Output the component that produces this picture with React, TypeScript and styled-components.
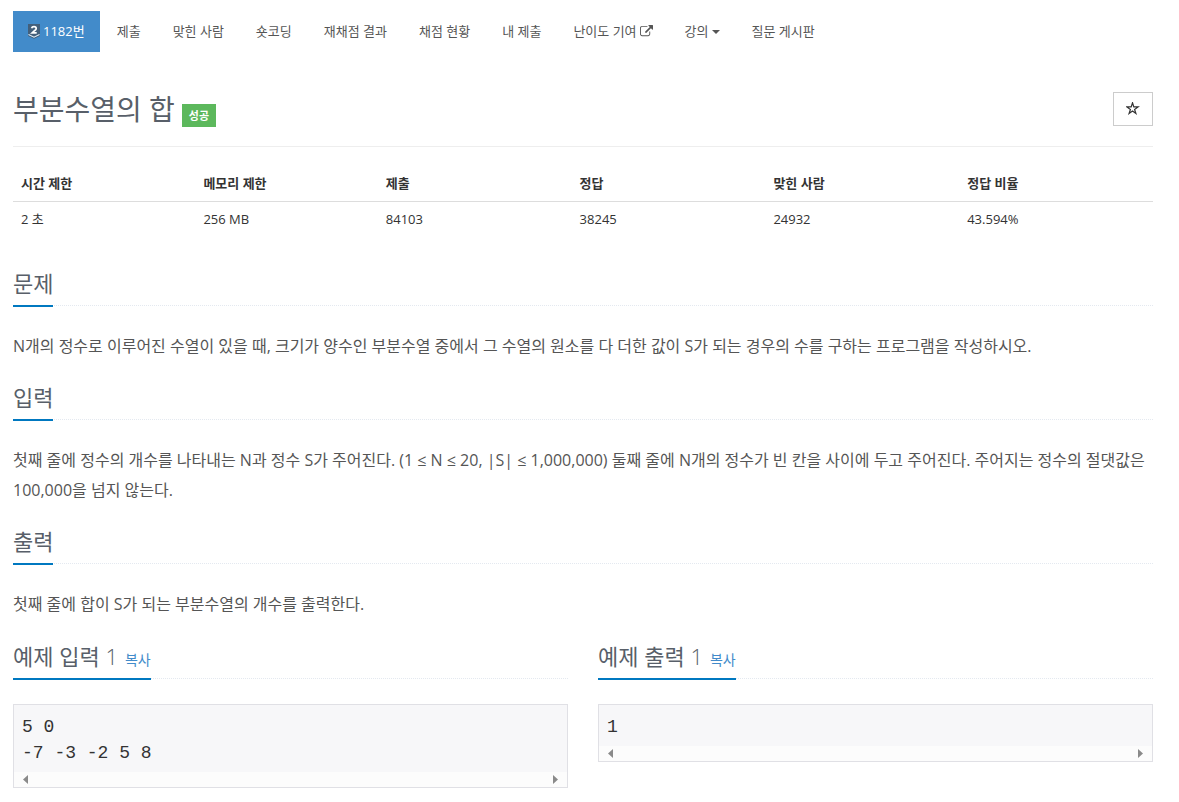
import React from "react";
import styled, { createGlobalStyle } from "styled-components";

const GlobalStyle = createGlobalStyle`
  *, *::before, *::after { box-sizing: border-box; }
  body {
    margin: 0;
    background: #fff;
    color: #333;
    font-family: "Open Sans", "Noto Sans CJK KR", sans-serif;
    font-size: 13px;
    line-height: 21px;
  }
`;

const Page = styled.main`
  max-width: 1179px;
  padding: 11px 26px 14px 13px;
`;

const Nav = styled.nav`
  display: flex;
  flex-wrap: wrap;
  gap: 2px;
`;

const NavLink = styled.a<{ $active?: boolean }>`
  display: flex;
  align-items: center;
  gap: 3px;
  padding: 10px 15px;
  text-decoration: none;
  white-space: nowrap;
  color: ${(p) => (p.$active ? "#fff" : "#555")};
  background: ${(p) => (p.$active ? "#428bca" : "transparent")};
`;

const Caret = styled.span`
  border-top: 4px solid currentColor;
  border-left: 4px solid transparent;
  border-right: 4px solid transparent;
`;

const TitleBar = styled.header`
  display: flex;
  align-items: flex-start;
  justify-content: space-between;
  margin-top: 40px;
  padding-bottom: 19px;
  border-bottom: 1px solid #eee;
`;

const TitleGroup = styled.div`
  display: flex;
  align-items: flex-end;
  gap: 7px;
`;

const Title = styled.h1`
  margin: 0;
  font-size: 28px;
  line-height: 35px;
  font-weight: 400;
  color: #585f69;
`;

const ResultLabel = styled.span`
  padding: 3px 7px 2px;
  background: #5cb85c;
  color: #fff;
  font-size: 11px;
  line-height: 18px;
  font-weight: 700;
`;

const StarButton = styled.button`
  display: flex;
  align-items: center;
  justify-content: center;
  width: 40px;
  height: 34px;
  padding: 0;
  border: 1px solid #ccc;
  background: #fff;
  color: #333;
`;

const InfoTable = styled.table`
  width: 100%;
  margin-top: 19px;
  border-collapse: collapse;
  table-layout: fixed;

  th,
  td {
    padding: 7px 8px;
    text-align: left;
  }
  th {
    border-bottom: 1px solid #ddd;
    font-weight: 700;
  }
  th:nth-child(-n + 2) {
    width: 16%;
  }
`;

const Section = styled.section<{ $gap?: number }>`
  margin-top: ${(p) => p.$gap ?? 20}px;
`;

const Headline = styled.div`
  display: flex;
  border-bottom: 1px dotted #e4e9f0;
`;

const Heading = styled.h2`
  margin: 0 0 -2px;
  padding-bottom: 5px;
  border-bottom: 2px solid #0078c0;
  font-size: 22px;
  line-height: 33px;
  font-weight: 400;
  color: #585f69;
  font-family: "Open Sans Light", "Noto Sans CJK KR", sans-serif;
`;

const CopyLink = styled.a`
  margin-left: 7px;
  color: #428bca;
  font-size: 14px;
  line-height: 1;
  text-decoration: none;
`;

const Text = styled.p`
  margin: 25px 0 0;
  font-size: 16px;
  line-height: 30px;
  font-weight: 400;
  color: #555;
`;

const Samples = styled.div`
  display: grid;
  grid-template-columns: 1fr 1fr;
  gap: 30px;
  align-items: start;
`;

const SampleBox = styled.div`
  margin-top: 25px;
  border: 1px solid #e0e0e5;
  background: #f7f7f9;
`;

const SampleData = styled.pre`
  margin: 0;
  padding: 9px 8px 6px;
  color: #333;
  font-family: "Liberation Mono", monospace;
  font-size: 18px;
  line-height: 26px;
`;

const ScrollTrack = styled.div`
  display: flex;
  align-items: center;
  justify-content: space-between;
  height: 15px;
  padding: 0 9px;
  background: #fcfcfc;
  color: #8a8a8a;
`;

const Arrow = ({ flip }: { flip?: boolean }) => (
  <svg width="5" height="9" viewBox="0 0 5 9" fill="currentColor" aria-hidden="true">
    <path d={flip ? "M0 0L5 4.5L0 9Z" : "M5 0L0 4.5L5 9Z"} />
  </svg>
);

const TierBadge = () => (
  <svg width="12" height="15" viewBox="0 0 12 15" aria-label="Silver II">
    <path d="M0 0H12V10L6 13L0 10Z" fill="#435f7a" />
    <path d="M0 10.6L6 13.4L12 10.6V12L6 14.8L0 12Z" fill="#435f7a" />
    <path d="M0.5 10.5L6 13.2L11.5 10.5" fill="none" stroke="#dfe8ef" strokeWidth="1.2" />
    <path d="M3.6 4.2Q4 2.6 6 2.6Q8.2 2.6 8.2 4.4Q8.2 5.4 6.8 6.5L4.2 8.9H8.7" fill="none" stroke="#fff" strokeWidth="1.7" />
  </svg>
);

const ExternalIcon = () => (
  <svg width="13" height="13" viewBox="0 0 1792 1792" fill="currentColor" aria-hidden="true">
    <path d="M1408 928v320q0 119-84.5 203.5t-203.5 84.5h-832q-119 0-203.5-84.5t-84.5-203.5v-832q0-119 84.5-203.5t203.5-84.5h704q14 0 23 9t9 23v64q0 14-9 23t-23 9h-704q-66 0-113 47t-47 113v832q0 66 47 113t113 47h832q66 0 113-47t47-113v-320q0-14 9-23t23-9h64q14 0 23 9t9 23zm384-864v512q0 26-19 45t-45 19-45-19l-176-176-652 652q-10 10-23 10t-23-10l-114-114q-10-10-10-23t10-23l652-652-176-176q-19-19-19-45t19-45 45-19h512q26 0 45 19t19 45z" />
  </svg>
);

const StarIcon = () => (
  <svg width="14" height="14" viewBox="0 0 14 14" fill="none" stroke="currentColor" strokeWidth="1.2" aria-hidden="true">
    <path d="M6.5 0.8L7.8 4.9H12.1L8.6 7.4L9.9 11.5L6.5 9L3.1 11.5L4.4 7.4L0.9 4.9H5.2Z" />
  </svg>
);

const menu = ["제출", "맞힌 사람", "숏코딩", "재채점 결과", "채점 현황", "내 제출"];

const info = [
  ["시간 제한", "2 초"],
  ["메모리 제한", "256 MB"],
  ["제출", "84103"],
  ["정답", "38245"],
  ["맞힌 사람", "24932"],
  ["정답 비율", "43.594%"],
];

const sections = [
  {
    title: "문제",
    text: "N개의 정수로 이루어진 수열이 있을 때, 크기가 양수인 부분수열 중에서 그 수열의 원소를 다 더한 값이 S가 되는 경우의 수를 구하는 프로그램을 작성하시오.",
  },
  {
    title: "입력",
    text: "첫째 줄에 정수의 개수를 나타내는 N과 정수 S가 주어진다. (1 ≤ N ≤ 20, |S| ≤ 1,000,000) 둘째 줄에 N개의 정수가 빈 칸을 사이에 두고 주어진다. 주어지는 정수의 절댓값은 100,000을 넘지 않는다.",
  },
  { title: "출력", text: "첫째 줄에 합이 S가 되는 부분수열의 개수를 출력한다." },
];

const samples = [
  { title: "예제 입력 1", data: "5 0\n-7 -3 -2 5 8" },
  { title: "예제 출력 1", data: "1" },
];

export default function App() {
  return (
    <Page>
      <GlobalStyle />
      <Nav>
        <NavLink href="#" $active>
          <TierBadge />
          1182번
        </NavLink>
        {menu.map((item) => (
          <NavLink href="#" key={item}>
            {item}
          </NavLink>
        ))}
        <NavLink href="#">
          난이도 기여
          <ExternalIcon />
        </NavLink>
        <NavLink href="#">
          강의
          <Caret />
        </NavLink>
        <NavLink href="#">질문 게시판</NavLink>
      </Nav>

      <TitleBar>
        <TitleGroup>
          <Title>부분수열의 합</Title>
          <ResultLabel>성공</ResultLabel>
        </TitleGroup>
        <StarButton type="button" aria-label="즐겨찾기">
          <StarIcon />
        </StarButton>
      </TitleBar>

      <InfoTable>
        <thead>
          <tr>
            {info.map(([name]) => (
              <th key={name} scope="col">
                {name}
              </th>
            ))}
          </tr>
        </thead>
        <tbody>
          <tr>
            {info.map(([name, value]) => (
              <td key={name}>{value}</td>
            ))}
          </tr>
        </tbody>
      </InfoTable>

      {sections.map(({ title, text }, index) => (
        <Section key={title} $gap={index === 0 ? 30 : 20}>
          <Headline>
            <Heading>{title}</Heading>
          </Headline>
          <Text>{text}</Text>
        </Section>
      ))}

      <Samples>
        {samples.map(({ title, data }) => (
          <Section key={title} $gap={21}>
            <Headline>
              <Heading>
                {title}
                <CopyLink href="#">복사</CopyLink>
              </Heading>
            </Headline>
            <SampleBox>
              <SampleData>{data}</SampleData>
              <ScrollTrack>
                <Arrow />
                <Arrow flip />
              </ScrollTrack>
            </SampleBox>
          </Section>
        ))}
      </Samples>
    </Page>
  );
}
